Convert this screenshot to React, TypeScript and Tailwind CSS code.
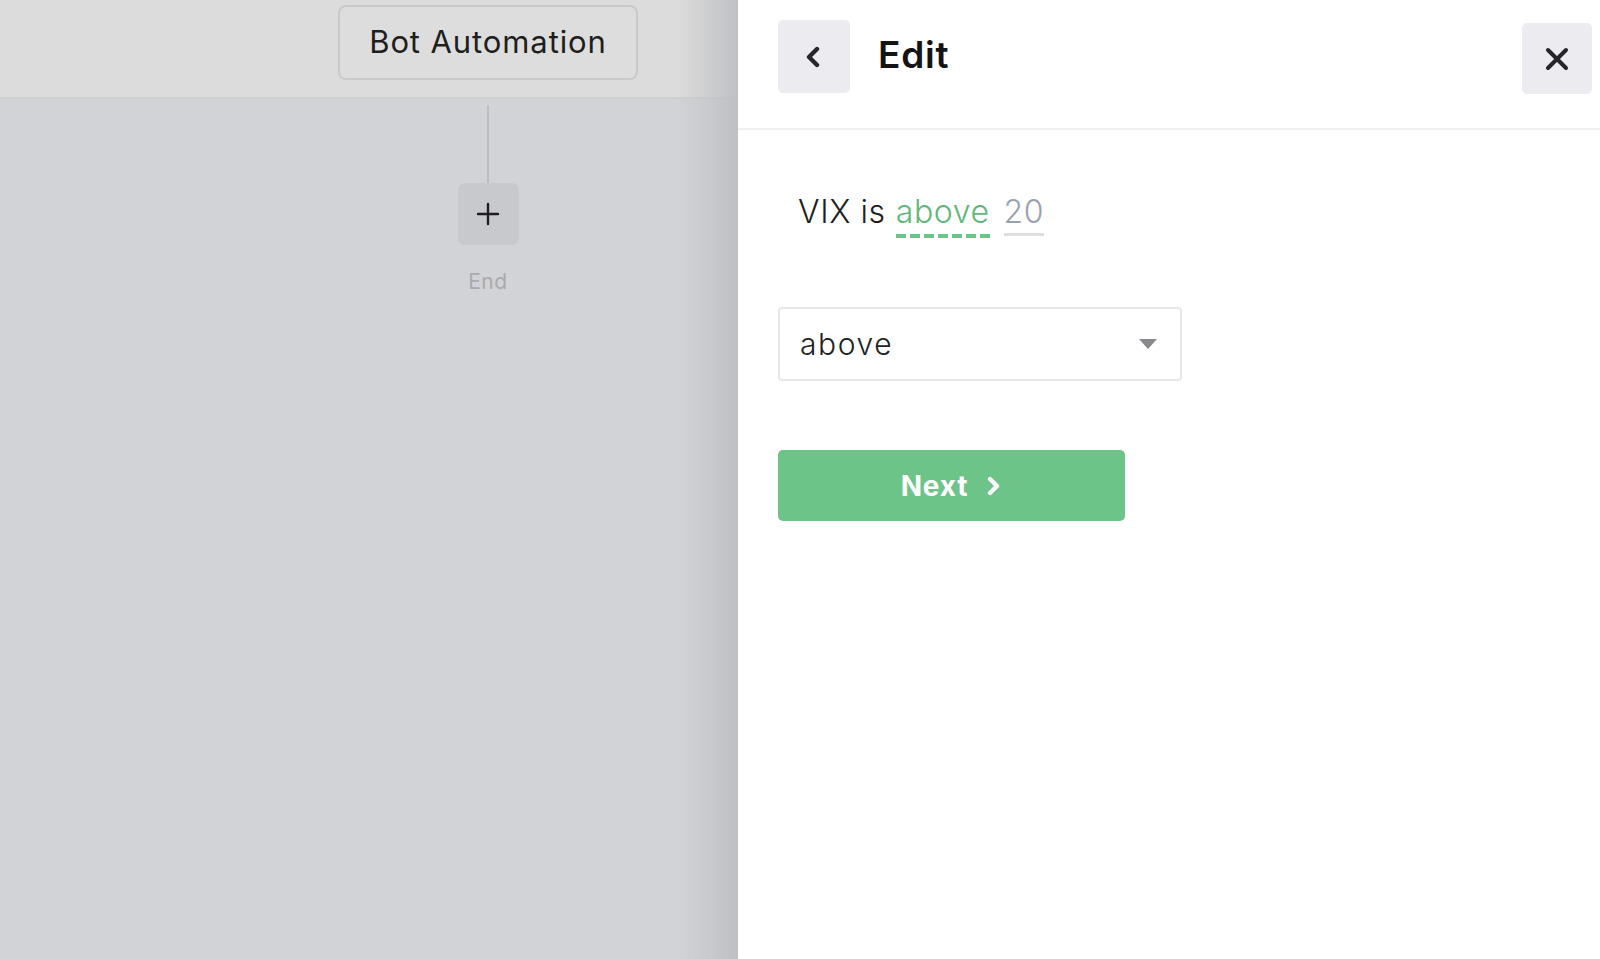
import React from "react";

export default function App() {
  const font = { fontFamily: "Inter, 'Noto Sans', 'Liberation Sans', sans-serif" };
  return (
    <div className="flex w-[1600px] h-[959px] overflow-hidden" style={font}>
      {/* Left dimmed canvas */}
      <div className="relative w-[738px] h-full flex flex-col bg-[#d2d3d6]">
        <div className="h-[99px] shrink-0 bg-[#dcdcdc] border-b-2 border-[#cfcfd1] pl-[338px] pt-[5px]">
          <div className="w-[300px] h-[75px] rounded-[8px] border-2 border-[#c9c9cb] bg-[#dddddd] flex items-center justify-center text-[31px] text-[#1e1e1e] tracking-[0.9px]">
            Bot Automation
          </div>
        </div>
        <div className="flex flex-col items-center w-[100px] ml-[438px] pt-[6px]">
          <div className="w-[2px] h-[78px] bg-[#bdbdc1]" />
          <div className="w-[61px] h-[62px] rounded-[7px] bg-[#c8c9cd] flex items-center justify-center">
            <svg width="26" height="26" viewBox="0 0 26 26">
              <path d="M13 3v20M3 13h20" stroke="#1e1e22" strokeWidth="2.4" strokeLinecap="round" />
            </svg>
          </div>
          <div className="mt-[24px] text-[21px] leading-[26px] text-[#a9aaae] tracking-[0.6px]">End</div>
        </div>
        <div className="absolute right-0 top-0 h-full w-[60px] bg-gradient-to-r from-transparent to-[#bfc0c4]" />
      </div>

      {/* Right panel */}
      <div className="flex-1 h-full bg-white flex flex-col">
        <div className="h-[130px] shrink-0 border-b-2 border-[#f0f0f2] flex items-start pl-[40px] pr-[8px]">
          <button className="mt-[20px] w-[72px] h-[73px] rounded-[5px] bg-[#ececf0] flex items-center justify-center">
            <svg width="22" height="22" viewBox="0 0 22 22">
              <path d="M14 3L6 11l8 8" stroke="#26262a" strokeWidth="4.4" fill="none" strokeLinecap="round" strokeLinejoin="round" />
            </svg>
          </button>
          <div className="ml-[28px] mt-[33px] text-[37px] leading-[44px] font-semibold text-[#141414] tracking-[0.8px]">Edit</div>
          <div className="flex-1" />
          <button className="mt-[23px] w-[70px] h-[71px] rounded-[5px] bg-[#ececf0] flex items-center justify-center">
            <svg width="26" height="26" viewBox="0 0 26 26">
              <path d="M4 4l18 18M22 4L4 22" stroke="#26262a" strokeWidth="4" strokeLinecap="round" />
            </svg>
          </button>
        </div>

        <div className="pl-[40px] pt-[62px]">
          <div className="flex items-start pl-[20px] text-[32px] leading-[40px] font-light tracking-[0.6px]">
            <span className="text-[#1e1e1e]">VIX is</span>
            <span className="ml-[10px] flex flex-col items-stretch">
              <span className="text-[#5fb77c]">above</span>
              <span className="mt-[2px] h-[4px] bg-[repeating-linear-gradient(90deg,#6cc48a_0px,#6cc48a_10px,transparent_10px,transparent_14px)]" />
            </span>
            <span className="ml-[14px] flex flex-col items-stretch">
              <span className="text-[#9aa1b2]">20</span>
              <span className="mt-[1px] h-[3px] bg-[#dedfe2]" />
            </span>
          </div>

          <div className="mt-[69px] w-[404px] h-[74px] rounded-[4px] border-2 border-[#e6e6e8] flex items-center pl-[20px] pr-[22px]">
            <span className="flex-1 text-[30px] text-[#222] font-light tracking-[1.6px]">above</span>
            <svg width="20" height="12" viewBox="0 0 20 12">
              <path d="M1 1h18l-9 10z" fill="#8a8a8e" />
            </svg>
          </div>

          <button className="mt-[69px] w-[347px] h-[71px] rounded-[5px] bg-[#6cc488] flex items-center justify-center gap-[18px] text-white text-[28px] font-bold tracking-[0.8px]">
            <span>Next</span>
            <svg width="16" height="20" viewBox="0 0 16 20">
              <path d="M4 3l7 7-7 7" stroke="#fff" strokeWidth="4.4" fill="none" strokeLinecap="round" strokeLinejoin="round" />
            </svg>
          </button>
        </div>
      </div>
    </div>
  );
}
